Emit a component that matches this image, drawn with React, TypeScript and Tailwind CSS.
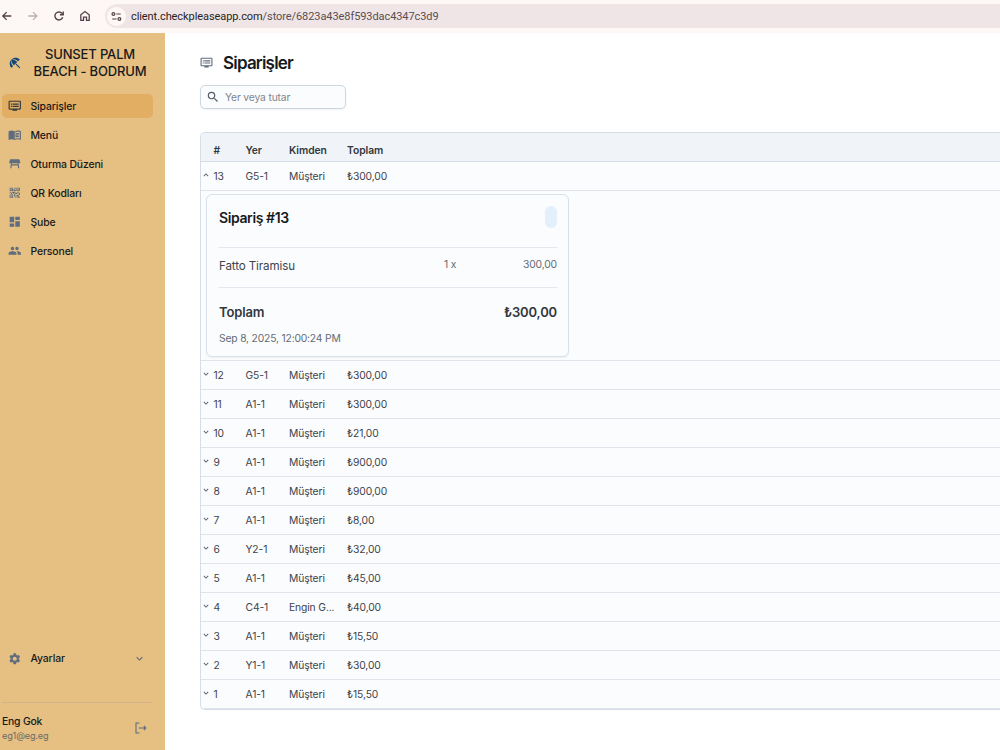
import React, { useState } from 'react'
import {
  MdBeachAccess,
  MdDvr,
  MdOutlineDvr,
  MdMenuBook,
  MdTableRestaurant,
  MdQrCode2,
  MdDashboard,
  MdPeople,
  MdSettings,
  MdKeyboardArrowDown,
  MdKeyboardArrowUp,
  MdSearch,
} from 'react-icons/md'

interface Order {
  id: number
  place: string
  from: string
  total: string
}

const ORDERS: Order[] = [
  { id: 13, place: 'G5-1', from: 'Müşteri', total: '₺300,00' },
  { id: 12, place: 'G5-1', from: 'Müşteri', total: '₺300,00' },
  { id: 11, place: 'A1-1', from: 'Müşteri', total: '₺300,00' },
  { id: 10, place: 'A1-1', from: 'Müşteri', total: '₺21,00' },
  { id: 9, place: 'A1-1', from: 'Müşteri', total: '₺900,00' },
  { id: 8, place: 'A1-1', from: 'Müşteri', total: '₺900,00' },
  { id: 7, place: 'A1-1', from: 'Müşteri', total: '₺8,00' },
  { id: 6, place: 'Y2-1', from: 'Müşteri', total: '₺32,00' },
  { id: 5, place: 'A1-1', from: 'Müşteri', total: '₺45,00' },
  { id: 4, place: 'C4-1', from: 'Engin G...', total: '₺40,00' },
  { id: 3, place: 'A1-1', from: 'Müşteri', total: '₺15,50' },
  { id: 2, place: 'Y1-1', from: 'Müşteri', total: '₺30,00' },
  { id: 1, place: 'A1-1', from: 'Müşteri', total: '₺15,50' },
]

const NAV = [
  { label: 'Siparişler', icon: MdDvr },
  { label: 'Menü', icon: MdMenuBook },
  { label: 'Oturma Düzeni', icon: MdTableRestaurant },
  { label: 'QR Kodları', icon: MdQrCode2 },
  { label: 'Şube', icon: MdDashboard },
  { label: 'Personel', icon: MdPeople },
]

function BrowserBar() {
  return (
    <header className="flex h-[33px] shrink-0 items-center bg-[#fdf7f6] pb-px text-[#54424a]">
      <div className="flex w-[105px] shrink-0 items-center gap-[14px] pl-px">
        <svg className="h-3 w-3" viewBox="0 0 12 12" fill="none" stroke="currentColor" strokeWidth="1.3">
          <path d="M10.3 6H1.9M5.7 2.1L1.8 6l3.9 3.9" />
        </svg>
        <svg className="h-3 w-3 text-[#b9b0b1]" viewBox="0 0 12 12" fill="none" stroke="currentColor" strokeWidth="1.3">
          <path d="M1.3 6h8.4M6 2.1L9.9 6 6 9.9" />
        </svg>
        <svg className="h-3 w-3" viewBox="0 0 12 12" fill="none" stroke="currentColor" strokeWidth="1.4">
          <path d="M9.7 7.2A4 4 0 1 1 9 3.4l1 1.1" />
          <path d="M10.2 1.4v3.3H6.9" />
        </svg>
        <svg className="h-3 w-3" viewBox="0 0 12 12" fill="none" stroke="currentColor" strokeWidth="1.3">
          <path d="M1.8 10.4V4.8L6 1.6l4.2 3.2v5.6H7.5V7.2h-3v3.2z" />
        </svg>
      </div>
      <div className="flex h-6 flex-1 items-center rounded-l-full bg-[#efe5e6] pl-0.5">
        <div className="flex h-[19px] w-[19px] items-center justify-center rounded-full bg-[#fdf7f6]">
          <svg className="h-[11px] w-[11px]" viewBox="0 0 11 11" fill="none" stroke="currentColor" strokeWidth="1.2">
            <circle cx="2.4" cy="3" r="1.4" />
            <path d="M5.3 3h4.4M1.2 8h4.4" />
            <circle cx="8.4" cy="8" r="1.4" />
          </svg>
        </div>
        <span className="mt-px ml-[5px] font-['Roboto'] text-[11px] leading-4 tracking-[-0.08px] text-[#5b4d51]">
          <span className="text-[#2b1e22]">client.checkpleaseapp.com</span>/store/6823a43e8f593dac4347c3d9
        </span>
      </div>
    </header>
  )
}

function Sidebar() {
  return (
    <aside className="flex w-[165px] shrink-0 flex-col bg-[#e6bf82] text-[#171a1c]">
      <div className="mt-3 flex h-[35px] items-center pl-2">
        <MdBeachAccess className="h-[14px] w-[14px] shrink-0 text-[#12467b]" />
        <h1 className="mt-px ml-[7px] w-[122px] text-center text-[13px] leading-[17px] font-medium tracking-[-0.15px]">
          SUNSET PALM
          <br />
          BEACH - BODRUM
        </h1>
      </div>

      <nav className="mt-[14px] flex flex-col gap-[5px]">
        {NAV.map(({ label, icon: Icon }, i) => (
          <a
            key={label}
            className={
              i === 0
                ? 'ml-0.5 flex h-6 w-[150.5px] items-center rounded-[5px] bg-[#e2ae64] pl-1.5 text-[#32383e]'
                : 'ml-0.5 flex h-6 w-[150.5px] items-center rounded-[5px] pl-1.5 text-[#5f6d7e]'
            }
          >
            <Icon className="h-[13.5px] w-[13.5px] shrink-0" />
            <span className="mt-0.5 ml-[9px] text-[10.4px] leading-4 font-medium tracking-[-0.12px] text-[#171a1c]">
              {label}
            </span>
          </a>
        ))}
      </nav>

      <a className="mt-auto flex h-6 items-center pl-2 text-[#5f6d7e]">
        <MdSettings className="h-[13.5px] w-[13.5px]" />
        <span className="ml-[9px] flex-1 text-[10.4px] leading-4 font-medium tracking-[-0.12px] text-[#171a1c]">
          Ayarlar
        </span>
        <MdKeyboardArrowDown className="mr-[19px] mb-px h-[13px] w-[13px]" />
      </a>

      <div className="mt-[31px] mr-[13px] ml-0.5 border-t border-[#d3b28a]" />
      <div className="flex h-[47px] items-center justify-between pt-0.5 pr-[17px] pl-0.5">
        <div>
          <div className="text-[10.4px] leading-[15px] font-medium tracking-[-0.2px]">Eng Gok</div>
          <div className="text-[9.1px] leading-[13px] tracking-[-0.15px] text-[#6c6c65]">eg1@eg.eg</div>
        </div>
        <svg className="h-3 w-3.5" viewBox="0 0 14 12" fill="none" stroke="#5f6d7e" strokeWidth="1.1">
          <path d="M5.5 1H2v10h3.5M4.8 6h7M9.8 4l2 2-2 2" />
        </svg>
      </div>
    </aside>
  )
}

function OrderCard() {
  return (
    <div className="flex h-[163px] w-[363px] flex-col rounded-[6px] border border-[#d9e1ea] bg-[#fbfcfe] pr-[11px] pl-3 shadow-[0_1px_2px_rgba(21,21,21,0.06)]">
      <div className="flex h-[52px] items-start justify-between">
        <h3 className="mt-[13px] text-[14px] leading-5 font-semibold tracking-[-0.4px] text-[#171a1c]">
          Sipariş #13
        </h3>
        <span className="mt-[11px] h-[22px] w-3 rounded-full bg-[#e3effb]" />
      </div>
      <div className="grid h-[41px] grid-cols-[225px_1fr_auto] items-center border-y border-[#e3e8ee] pb-[5px] text-[10.3px] tracking-[-0.12px] text-[#636b74]">
        <span className="pt-0.5 text-[11.6px] leading-4 text-[#3d434a]">Fatto Tiramisu</span>
        <span>1 x</span>
        <span>300,00</span>
      </div>
      <div className="mt-[14px] flex items-center justify-between text-[13px] leading-5 font-semibold tracking-[-0.15px] text-[#32383e]">
        <span>Toplam</span>
        <span>₺300,00</span>
      </div>
      <div className="mt-2 text-[10.3px] leading-4 tracking-[-0.17px] text-[#636b74]">Sep 8, 2025, 12:00:24 PM</div>
    </div>
  )
}

export default function App() {
  const [openId, setOpenId] = useState<number | null>(13)

  return (
    <div className="flex h-[750px] w-[1000px] flex-col overflow-hidden bg-white font-['Inter',sans-serif]">
      <BrowserBar />
      <div className="flex min-h-0 flex-1">
        <Sidebar />

        <main className="min-w-0 flex-1 pl-[34.5px]">
          <div className="mt-5 flex h-5 items-center">
            <MdOutlineDvr className="mb-0.5 h-[13px] w-[13px] text-[#5f6d7e]" />
            <h2 className="ml-[10.5px] text-[17px] leading-5 font-semibold tracking-[-0.8px] text-[#171a1c]">
              Siparişler
            </h2>
          </div>

          <label className="mt-3 flex h-6 w-[146px] items-center rounded-[5px] border border-[#cdd7e1] bg-[#fbfcfe] pl-[5px] shadow-[0_1px_2px_rgba(21,21,21,0.06)]">
            <MdSearch className="h-[14px] w-[14px] text-[#555e68]" />
            <input
              className="mt-px ml-[5.5px] w-[110px] text-[10.3px] tracking-[-0.15px] outline-none placeholder:text-[#80868d]"
              placeholder="Yer veya tutar"
            />
          </label>

          {/* Orders table, runs past the right edge */}
          <div className="mt-[23px] ml-[0.5px] h-[578px] overflow-hidden rounded-l-[5px] border-y border-l border-[#d5dee7] bg-[#fbfcfe] text-[10.3px] tracking-[-0.12px] text-[#3d434a]">
            <div className="grid h-[29px] grid-cols-[12.5px_32px_43.5px_58px_1fr] items-center border-b border-[#d5dee7] bg-[#f0f4f8] pt-2 font-semibold tracking-[-0.05px] text-[#32383e]">
              <span />
              <span>#</span>
              <span>Yer</span>
              <span>Kimden</span>
              <span>Toplam</span>
            </div>
            {ORDERS.map((order) => {
              const open = openId === order.id
              const Arrow = open ? MdKeyboardArrowUp : MdKeyboardArrowDown
              return (
                <React.Fragment key={order.id}>
                  <div
                    className="grid h-[29px] cursor-pointer grid-cols-[12.5px_32px_43.5px_58px_1fr] items-center border-b border-[#dfe4ea] pt-px"
                    onClick={() => setOpenId(open ? null : order.id)}
                  >
                    <Arrow className="mb-1 h-[10px] w-[10px] text-[#555e68]" />
                    <span>{order.id}</span>
                    <span>{order.place}</span>
                    <span>{order.from}</span>
                    <span>{order.total}</span>
                  </div>
                  {open && (
                    <div className="h-[170px] border-b border-[#dfe4ea] pt-[3px] pl-[5px]">
                      <OrderCard />
                    </div>
                  )}
                </React.Fragment>
              )
            })}
          </div>
        </main>
      </div>
    </div>
  )
}
